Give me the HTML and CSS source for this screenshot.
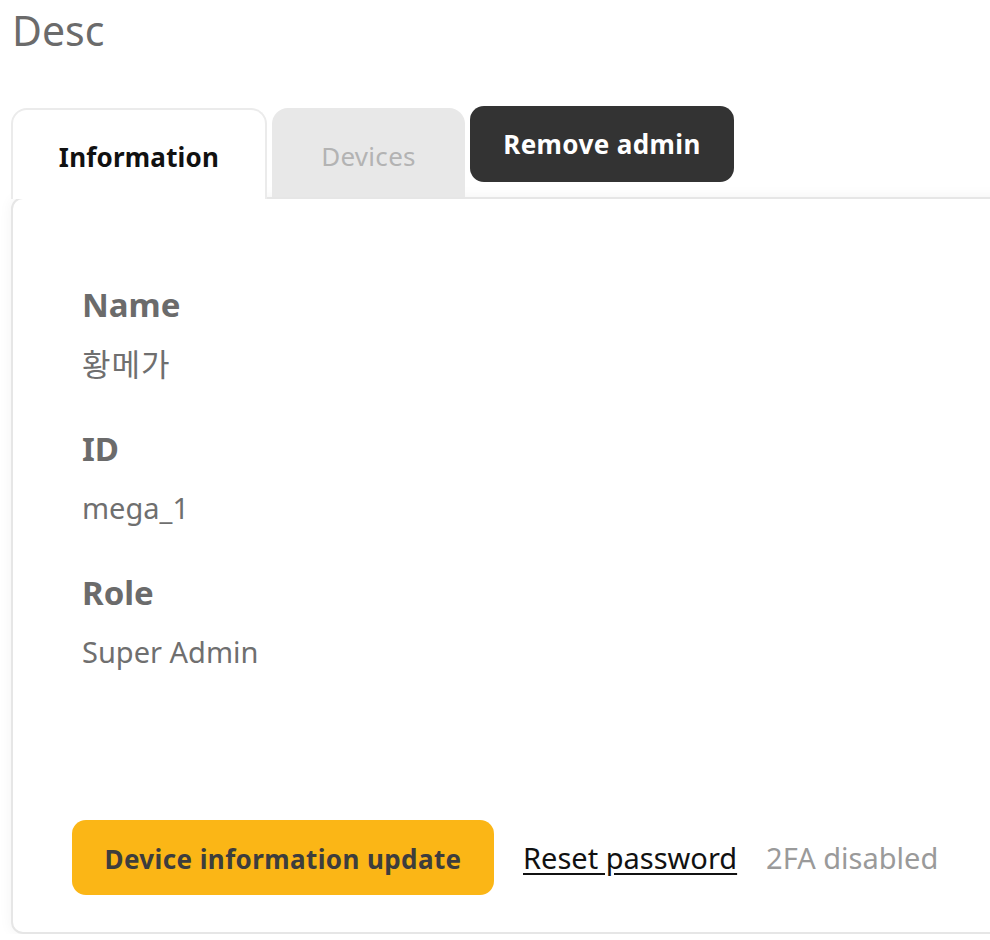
FILE: index.html
```html
<!DOCTYPE html>
<html lang="ko">
<head>
<meta charset="utf-8">
<title>Desc</title>
<link rel="stylesheet" href="styles.css">
</head>
<body>
<div class="page">
  <h1 class="title">Desc</h1>
  <div class="tabs">
    <div class="tab tab-active">Information</div>
    <div class="tab tab-inactive">Devices</div>
    <button class="btn-dark">Remove admin</button>
  </div>
  <div class="card">
    <div class="info">
      <div class="field">
        <div class="label">Name</div>
        <div class="value value-ko">황메가</div>
      </div>
      <div class="field">
        <div class="label">ID</div>
        <div class="value">mega_1</div>
      </div>
      <div class="field">
        <div class="label">Role</div>
        <div class="value">Super Admin</div>
      </div>
    </div>
    <div class="actions">
      <button class="btn-yellow">Device information update</button>
      <a class="link" href="#">Reset password</a>
      <span class="muted">2FA disabled</span>
    </div>
  </div>
</div>
</body>
</html>
```
FILE: styles.css
```css
html, body {
  margin: 0;
  padding: 0;
  background: #ffffff;
  overflow: hidden;
}
body {
  font-family: "Noto Sans", "Noto Sans CJK KR", sans-serif;
  color: #6b6b6b;
}
.page {
  padding: 10px 0 0 11px;
}
.title {
  margin: 0 0 55px 1px;
  font-size: 41px;
  line-height: 41px;
  font-weight: 400;
  color: #6b6b6b;
}
.tabs {
  display: flex;
  align-items: flex-start;
  gap: 5px;
  position: relative;
  z-index: 1;
  margin-bottom: -2px;
}
.tab {
  box-sizing: border-box;
  height: 91px;
  margin-top: 2px;
  padding-top: 8px;
  line-height: 81px;
  font-size: 26px;
  text-align: center;
  border-radius: 16px 16px 0 0;
}
.tab-active {
  width: 256px;
  background: #ffffff;
  border: 2px solid #ebebeb;
  border-bottom: none;
  color: #111111;
  font-weight: 700;
  line-height: 79px;
  letter-spacing: 0.2px;
}
.tab-inactive {
  width: 193px;
  background: #e8e8e8;
  color: #b3b3b3;
  height: 89px;
  letter-spacing: 0.3px;
}
.btn-dark {
  width: 264px;
  height: 76px;
  border: none;
  border-radius: 14px;
  background: #333333;
  color: #ffffff;
  font-family: inherit;
  font-size: 26px;
  font-weight: 700;
  line-height: 74px;
  letter-spacing: 0.4px;
  padding: 0;
}
.card {
  box-sizing: border-box;
  height: 737px;
  margin-right: -30px;
  border: 2px solid #e6e6e6;
  border-radius: 12px;
  background: #ffffff;
  box-shadow: 0 0 14px rgba(0, 0, 0, 0.05);
  padding: 84px 0 37px 59px;
  display: flex;
  flex-direction: column;
}
.info {
  padding-left: 10px;
  display: flex;
  flex-direction: column;
  gap: 41px;
}
.label {
  font-size: 33px;
  line-height: 44px;
  font-weight: 700;
  color: #6b6b6b;
  margin-bottom: 15px;
}
.value {
  font-size: 29px;
  line-height: 44px;
  color: #6f6f6f;
}
.value-ko {
  font-size: 31px;
  letter-spacing: 1px;
}
.actions {
  margin-top: auto;
  display: flex;
  align-items: center;
  gap: 29px;
}
.btn-yellow {
  height: 75px;
  width: 422px;
  border: none;
  border-radius: 14px;
  background: #fbb616;
  color: #3d3d3d;
  font-family: inherit;
  font-size: 26px;
  font-weight: 700;
  letter-spacing: 0.4px;
  padding: 3px 0 0 0;
}
.link {
  font-size: 29px;
  color: #111111;
  text-decoration: underline;
  text-underline-offset: 4px;
}
.muted {
  font-size: 29px;
  color: #9a9a9a;
}
```
